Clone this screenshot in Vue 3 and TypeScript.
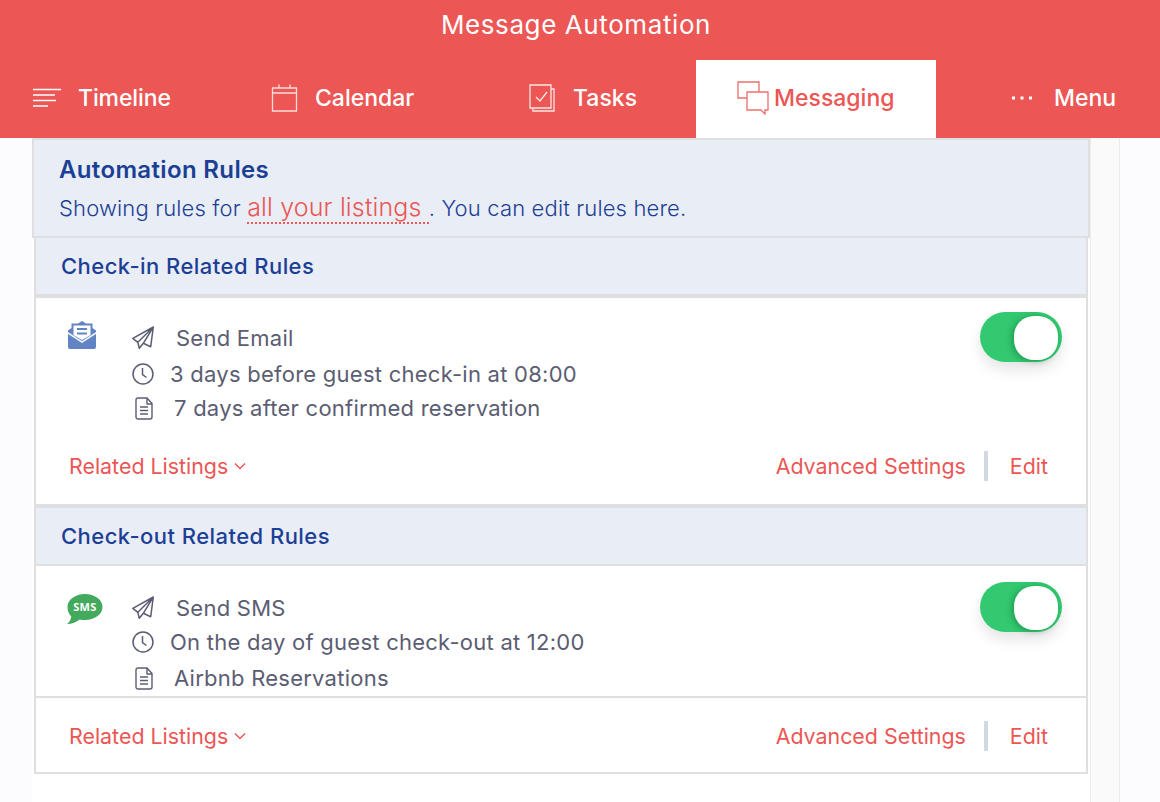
<script setup lang="ts">
type RuleRow = { icon: 'send' | 'clock' | 'doc'; text: string; gap: number; height: number }
type Rule = {
  title: string
  channel: 'email' | 'sms'
  rows: RuleRow[]
}

const tabs = [
  { key: 'timeline', label: 'Timeline' },
  { key: 'calendar', label: 'Calendar' },
  { key: 'tasks', label: 'Tasks' },
  { key: 'messaging', label: 'Messaging', active: true },
  { key: 'menu', label: 'Menu' },
]

const rules: Rule[] = [
  {
    title: 'Check-in Related Rules',
    channel: 'email',
    rows: [
      { icon: 'send', text: 'Send Email', gap: 20, height: 36 },
      { icon: 'clock', text: '3 days before guest check-in at 08:00', gap: 14, height: 36 },
      { icon: 'doc', text: '7 days after confirmed reservation', gap: 18, height: 32 },
    ],
  },
  {
    title: 'Check-out Related Rules',
    channel: 'sms',
    rows: [
      { icon: 'send', text: 'Send SMS', gap: 20, height: 34 },
      { icon: 'clock', text: 'On the day of guest check-out at 12:00', gap: 14, height: 34 },
      { icon: 'doc', text: 'Airbnb Reservations', gap: 18, height: 38 },
    ],
  },
]
</script>

<template>
  <div class="page">
    <header class="top">
      <h1 class="title">Message Automation</h1>
      <nav class="tabs">
        <a v-for="tab in tabs" :key="tab.key" class="tab" :class="[tab.key, { active: tab.active }]">
          <svg v-if="tab.key === 'timeline'" width="30" height="22" viewBox="0 0 30 22" fill="none" stroke="currentColor" stroke-width="1.5">
            <path d="M1 2.500h28M1 8h22M1 13.500h23M1 19h15" />
          </svg>
          <svg v-else-if="tab.key === 'calendar'" width="27" height="28" viewBox="0 0 27 28" fill="none" stroke="currentColor" stroke-width="1.3" opacity=".8">
            <path d="M1.500 4h24v23h-24zM1.500 9h24M8 .5V4M19 .5V4" />
          </svg>
          <svg v-else-if="tab.key === 'tasks'" width="26" height="28" viewBox="0 0 26 28" fill="none" stroke="currentColor" stroke-width="1.300" opacity=".85">
            <path d="M1 1h21v23H1z" />
            <path d="M22 5h3v22H4v-3" />
            <path d="M7 13l4 4 7-9" />
          </svg>
          <svg v-else-if="tab.key === 'messaging'" width="32" height="34" viewBox="0 0 32 34" fill="none" stroke="currentColor" stroke-width="1.300" opacity=".85">
            <path d="M10 17H1V1h21v10" />
            <path d="M10 11h21v18h-3v4l-4-4H10z" />
          </svg>
          <svg v-else width="20" height="6" viewBox="0 0 20 6" fill="currentColor">
            <rect x="0" y="1.500" width="3" height="3" />
            <rect x="8.500" y="1.500" width="3" height="3" />
            <rect x="17" y="1.500" width="3" height="3" />
          </svg>
          <span>{{ tab.label }}</span>
        </a>
      </nav>
    </header>

    <div class="body">
      <main class="panel">
        <section class="intro">
          <h2>Automation Rules</h2>
          <p>Showing rules for <a class="scope">all your listings </a>. You can edit rules here.</p>
        </section>

        <div class="rules">
          <section v-for="rule in rules" :key="rule.title" class="rule" :class="rule.channel">
            <h3 class="rule-head">{{ rule.title }}</h3>
            <div class="rule-main">
              <svg v-if="rule.channel === 'email'" class="channel" width="30" height="30" viewBox="0 0 30 30">
                <path fill="#6384c4" d="M15 1l4 2.500h6.500V8L29 10.500V27a2 2 0 0 1-2 2H3a2 2 0 0 1-2-2V10.500L4.500 8V3.500H11z" />
                <path fill="#fff" d="M6.500 5.500h17v9.500L15 20 6.500 15z" />
                <path fill="#6384c4" d="M10 8h10v2H10zM10 12.500h10v2H10z" />
                <path fill="#fff" d="M1 12l14 9 14-9v2L15 23 1 14z" opacity=".9" />
              </svg>
              <svg v-else class="channel" width="36" height="32" viewBox="0 0 36 32">
                <path fill="#43a95d" d="M18 1c9.500 0 17.500 5.500 17.500 13S27.500 27 18 27c-2 0-3.500-.2-5.300-.6C9.500 29 5 31 0 31c2.500-2 4-4.500 4.300-7.500C1.800 21 .5 17.800.5 14 .5 6.500 8.500 1 18 1z" />
                <text x="18" y="18" text-anchor="middle" class="sms-label">SMS</text>
              </svg>
              <ul class="rows">
                <li v-for="row in rule.rows" :key="row.text" class="row" :style="{ height: row.height + 'px' }">
                  <span class="row-icon">
                    <svg v-if="row.icon === 'send'" width="24" height="24" viewBox="0 0 24 24" fill="none" stroke="currentColor" stroke-width="1.500" stroke-linejoin="round">
                      <path d="M21.300 1L.8 12.300l5 4 1.500 6 4-5 7.400 3.400zM21.300 1L5.800 16.300M21.300 1L11.300 17.300" />
                    </svg>
                    <svg v-else-if="row.icon === 'clock'" class="clock" width="22" height="22" viewBox="0 0 22 22" fill="none" stroke="currentColor" stroke-width="1.500">
                      <circle cx="11" cy="11" r="10" />
                      <path d="M10.500 5v6.500l4 3" />
                    </svg>
                    <svg v-else width="18" height="23" viewBox="0 0 18 23" fill="none" stroke="currentColor" stroke-width="1.400" stroke-linejoin="round">
                      <path d="M1 3a2 2 0 0 1 2-2h9l5 5.500V20a2 2 0 0 1-2 2H3a2 2 0 0 1-2-2z" />
                      <path d="M12 1v6h5M5 10h8M5 13.500h8M5 17h8" />
                    </svg>
                  </span>
                  <span :style="{ marginLeft: row.gap + 'px' }">{{ row.text }}</span>
                </li>
              </ul>
              <div class="toggle"><span class="knob"></span></div>
            </div>
            <footer class="rule-foot">
              <a class="link related">
                Related Listings
                <svg width="12" height="8" viewBox="0 0 12 8" fill="none" stroke="currentColor" stroke-width="1.400">
                  <path d="M1 1.500l5 5 5-5" />
                </svg>
              </a>
              <div class="actions">
                <a class="link">Advanced Settings</a>
                <span class="sep"></span>
                <a class="link">Edit</a>
              </div>
            </footer>
          </section>
        </div>
      </main>
      <div class="strip"></div>
    </div>
  </div>
</template>

<style>
html,
body {
  margin: 0;
  background: #fff;
}
</style>

<style scoped>
.page {
  width: 1160px;
  height: 802px;
  overflow: hidden;
  font-family: Inter, 'Liberation Sans', sans-serif;
  background: #fcfcff;
}

.top {
  height: 138px;
  background: #ec5654;
  color: #fff;
}

.title {
  margin: 0;
  height: 60px;
  padding-right: 8px;
  font-size: 26px;
  font-weight: 400;
  line-height: 50px;
  text-align: center;
  letter-spacing: 0.6px;
}

.tabs {
  display: grid;
  grid-template-columns: 232px 232px 232px 240px 224px;
  height: 78px;
}

.tab {
  display: flex;
  align-items: center;
  font-size: 23px;
  font-weight: 500;
  line-height: 1;
  padding-bottom: 2px;
  box-sizing: border-box;
}

.tab.timeline {
  padding-left: 32px;
  gap: 16px;
  letter-spacing: -0.1px;
}

.tab.calendar {
  padding-left: 39px;
  gap: 17px;
}

.tab.tasks {
  padding-left: 65px;
  gap: 18px;
}

.tab.messaging {
  padding-left: 41px;
  gap: 5px;
  background: #fff;
  color: #ec5654;
}

.tab.menu {
  padding-left: 76px;
  gap: 22px;
}

.body {
  display: flex;
  height: 664px;
}

.panel {
  width: 1058px;
  margin-left: 32px;
  background: #fff;
  flex: none;
}

.intro {
  height: 100px;
  box-sizing: border-box;
  border: 2px solid #dedfe0;
  background: #e9edf5;
  padding: 15px 25px 0;
  color: #1c3f96;
}

.intro h2 {
  margin: 0;
  font-size: 24px;
  font-weight: 600;
  letter-spacing: 0.35px;
  line-height: 30px;
}

.intro p {
  margin: 8px 0 0;
  font-size: 22px;
  font-weight: 300;
  letter-spacing: 0.15px;
  line-height: 28px;
}

.scope {
  color: #ec5654;
  font-size: 25px;
  border-bottom: 2px dotted #ec5654;
}

.rules {
  margin: 0 2px;
  border: solid #dedfe0;
  border-width: 0 2px;
  border-bottom-width: 2px;
}

.rule-head {
  margin: 0;
  height: 60px;
  box-sizing: border-box;
  padding-left: 25px;
  background: #e9edf5;
  color: #1c3f96;
  font-size: 22px;
  font-weight: 500;
  letter-spacing: 0.45px;
  line-height: 56px;
  border-bottom: 4px solid #dedfe0;
}

.rule.sms {
  border-top: 4px solid #dedfe0;
}

.rule.sms .rule-head {
  border-bottom-width: 2px;
  height: 58px;
  line-height: 57px;
}

.rule-main {
  position: relative;
  display: flex;
  align-items: flex-start;
}

.rule.email .rule-main {
  height: 206px;
  flex: none;
}

.rule.sms .rule-main {
  height: 130px;
  border-bottom: 2px solid #dedfe0;
}

.channel {
  position: absolute;
  left: 31px;
  top: 22px;
}

.rule.sms .channel {
  top: 27px;
}

.rows {
  list-style: none;
  margin: 0;
  padding: 22px 0 0 96px;
  color: #5b5d72;
  font-size: 22px;
  letter-spacing: 0.25px;
}

.rule.sms .rows {
  padding-top: 25px;
}

.row {
  display: flex;
  align-items: center;
}

.row-icon {
  display: inline-flex;
  width: 24px;
  justify-content: center;
}

.clock {
  margin-left: -2px;
}

.toggle {
  position: absolute;
  right: 24px;
  top: 14px;
  box-sizing: border-box;
  display: flex;
  justify-content: flex-end;
  width: 82px;
  height: 50px;
  padding: 4px;
  border-radius: 25px;
  background: #32c970;
  box-shadow: 0 8px 14px rgba(0, 0, 0, 0.1);
}

.rule.sms .toggle {
  top: 16px;
}

.knob {
  width: 44px;
  height: 44px;
  border-radius: 20px;
  background: #fff;
  box-shadow: -2px 1px 6px rgba(0, 60, 20, 0.35);
}

.rule-foot {
  display: flex;
  align-items: center;
  justify-content: space-between;
}

.rule.email .rule-foot {
  margin-top: -76px;
  position: relative;
  height: 76px;
}

.rule.sms .rule-foot {
  height: 76px;
  margin-bottom: -2px;
}

.link {
  color: #ec5654;
  font-size: 21.4px;
}

.related {
  margin-left: 33px;
  display: inline-flex;
  align-items: center;
  gap: 6px;
}

.actions {
  display: flex;
  align-items: center;
  margin-right: 38px;
}

.sep {
  width: 4px;
  height: 30px;
  background: #d0d9e2;
  margin: 0 22px 0 18px;
}

.strip {
  width: 28px;
  box-sizing: content-box;
  height: 100%;
  background: #fafafa;
  border-left: 1px solid #ececec;
  border-right: 1px solid #ececec;
}

.sms-label {
  fill: #fff;
  font-size: 11px;
  font-weight: 700;
  letter-spacing: 0.4px;
  font-family: 'Open Sans', sans-serif;
}
</style>
